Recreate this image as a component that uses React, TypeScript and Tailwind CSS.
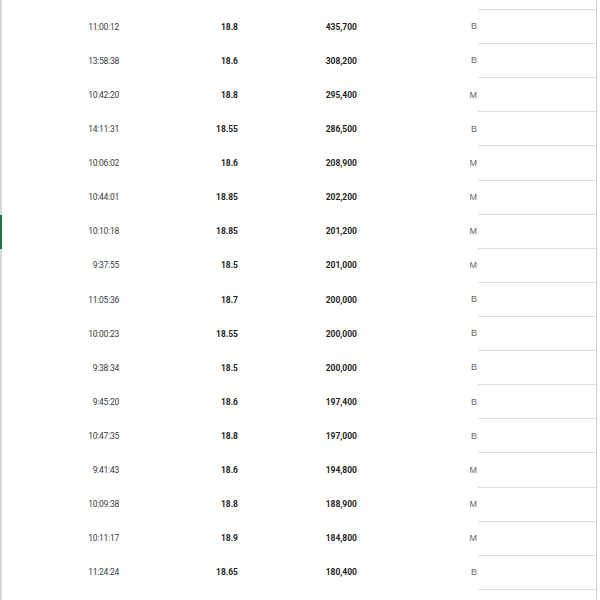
const trades = [
  { time: "11:00:12", price: "18.8", volume: "435,700", side: "B" },
  { time: "13:58:38", price: "18.6", volume: "308,200", side: "B" },
  { time: "10:42:20", price: "18.8", volume: "295,400", side: "M" },
  { time: "14:11:31", price: "18.55", volume: "286,500", side: "B" },
  { time: "10:06:02", price: "18.6", volume: "208,900", side: "M" },
  { time: "10:44:01", price: "18.85", volume: "202,200", side: "M" },
  { time: "10:10:18", price: "18.85", volume: "201,200", side: "M" },
  { time: "9:37:55", price: "18.5", volume: "201,000", side: "M" },
  { time: "11:05:36", price: "18.7", volume: "200,000", side: "B" },
  { time: "10:00:23", price: "18.55", volume: "200,000", side: "B" },
  { time: "9:38:34", price: "18.5", volume: "200,000", side: "B" },
  { time: "9:45:20", price: "18.6", volume: "197,400", side: "B" },
  { time: "10:47:35", price: "18.8", volume: "197,000", side: "B" },
  { time: "9:41:43", price: "18.6", volume: "194,800", side: "M" },
  { time: "10:09:38", price: "18.8", volume: "188,900", side: "M" },
  { time: "10:11:17", price: "18.9", volume: "184,800", side: "M" },
  { time: "11:24:24", price: "18.65", volume: "180,400", side: "B" },
];

function App() {
  return (
    <div className="w-[600px] h-[600px] overflow-hidden bg-white font-['Roboto',sans-serif] text-[8.5px]">
      <div className="grid grid-cols-[476px_119px] h-[10px] border-l-2 border-[#d9d9d9]">
        <div />
        <div className="border-b border-r border-[#dedede] border-r-[#cfcfcf]" />
      </div>
      {trades.map((t, i) => (
        <div
          key={i}
          className={`grid grid-cols-[118px_119px_119px_120px_119px] h-[34.12px] border-l-2 ${
            i === 6 ? "border-[#217346]" : "border-[#d9d9d9]"
          }`}
        >
          <div className="flex items-center justify-end pr-[1px] text-[#3a3a3a] tracking-[-0.25px]">{t.time}</div>
          <div className="flex items-center justify-end pr-[1px] font-bold text-[#1f1f1f]">{t.price}</div>
          <div className="flex items-center justify-end pr-[1px] font-bold text-[#1f1f1f]">{t.volume}</div>
          <div className="flex items-center justify-end pr-[1px] text-[9px] text-[#666] font-['Liberation_Sans',sans-serif]">{t.side}</div>
          <div className="border-b border-r border-[#dedede] border-r-[#cfcfcf]" />
        </div>
      ))}
      <div className="grid grid-cols-[476px_119px] h-[20px] border-l-2 border-[#d9d9d9]">
        <div />
        <div className="border-r border-[#cfcfcf]" />
      </div>
    </div>
  );
}

export default App;
